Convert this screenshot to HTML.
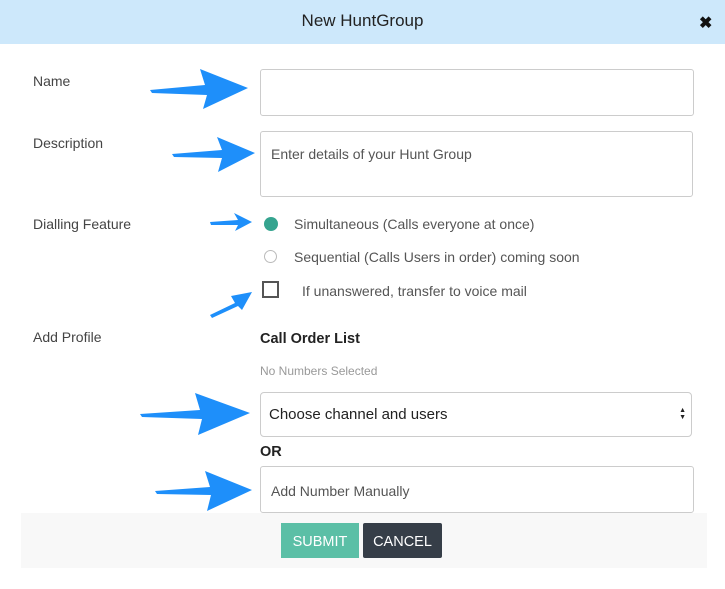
<!DOCTYPE html><html><head><style>
body{margin:0;width:725px;height:589px;background:#fff;font-family:"Liberation Sans",sans-serif;position:relative;overflow:hidden;color:#333}
.a{position:absolute}
.hd{left:0;top:0;width:725px;height:44px;background:#cde8fb;text-align:center;line-height:42px;font-size:17px;color:#222}
.lb{font-size:14px;color:#444;left:33px}
.box{border:1px solid #ccc;border-radius:3px;background:#fff;box-sizing:border-box}
.t{font-size:14px;color:#555}
</style></head><body>
<div class="a hd">New HuntGroup</div>
<div class="a" style="left:699px;top:13px;font-size:16px;font-weight:bold;color:#111">✖</div>
<div class="a lb" style="top:73px">Name</div>
<div class="a lb" style="top:135px">Description</div>
<div class="a lb" style="top:216px">Dialling Feature</div>
<div class="a lb" style="top:329px">Add Profile</div>
<div class="a box" style="left:260px;top:69px;width:434px;height:47px"></div>
<div class="a box" style="left:260px;top:131px;width:433px;height:66px"><span class="t" style="position:absolute;left:10px;top:14px">Enter details of your Hunt Group</span></div>
<div class="a" style="left:264px;top:217px;width:14px;height:14px;border-radius:50%;background:#35a48f"></div>
<div class="a t" style="left:294px;top:216px">Simultaneous (Calls everyone at once)</div>
<div class="a" style="left:264px;top:250px;width:11px;height:11px;border-radius:50%;border:1.5px solid #bbb"></div>
<div class="a t" style="left:294px;top:249px">Sequential (Calls Users in order) coming soon</div>
<div class="a" style="left:262px;top:281px;width:13px;height:13px;border:2px solid #555"></div>
<div class="a t" style="left:302px;top:283px">If unanswered, transfer to voice mail</div>
<div class="a" style="left:260px;top:331px;font-size:14.5px;font-weight:bold;color:#222">Call Order List</div>
<div class="a" style="left:260px;top:364px;font-size:12px;color:#999">No Numbers Selected</div>
<div class="a box" style="left:260px;top:392px;width:432px;height:45px;border-radius:4px"><span style="position:absolute;left:8px;top:13px;font-size:15px;color:#222">Choose channel and users</span><span style="position:absolute;right:5px;top:14px;font-size:7px;line-height:7px;color:#222">▲<br>▼</span></div>
<div class="a" style="left:260px;top:444px;font-size:14.5px;font-weight:bold;color:#222">OR</div>
<div class="a box" style="left:260px;top:466px;width:434px;height:47px"><span class="t" style="position:absolute;left:10px;top:16px">Add Number Manually</span></div>
<div class="a" style="left:21px;top:513px;width:686px;height:55px;background:#f8f8f8"></div>
<div class="a" style="left:281px;top:523px;width:78px;height:35px;background:#5bbfa6;color:#fff;font-size:14.5px;text-align:center;line-height:38px">SUBMIT</div>
<div class="a" style="left:363px;top:523px;width:79px;height:35px;background:#363e48;color:#fff;font-size:14.5px;text-align:center;line-height:38px;border-radius:2px">CANCEL</div>
<svg class="a" style="left:0;top:0" width="725" height="589">
<g fill="#1e8ffa">
<polygon points="150,90 205,85 200,69 248,88 203,109 207,95 152,93"/>
<polygon points="172,154 222,150 217,137 255,153 218,172 222,158 174,157"/>
<polygon points="210,222 238,220 234,213 252,222 235,231 238,225 211,225"/>
<polygon points="210,315 235,303 231,296 252,292 242,310 238,306 212,318"/>
<polygon points="140,414 200,410 195,393 250,413 198,435 202,419 142,417"/>
<polygon points="155,491 210,487 205,471 252,490 207,511 211,495 157,494"/>
</g></svg>
</body></html>
